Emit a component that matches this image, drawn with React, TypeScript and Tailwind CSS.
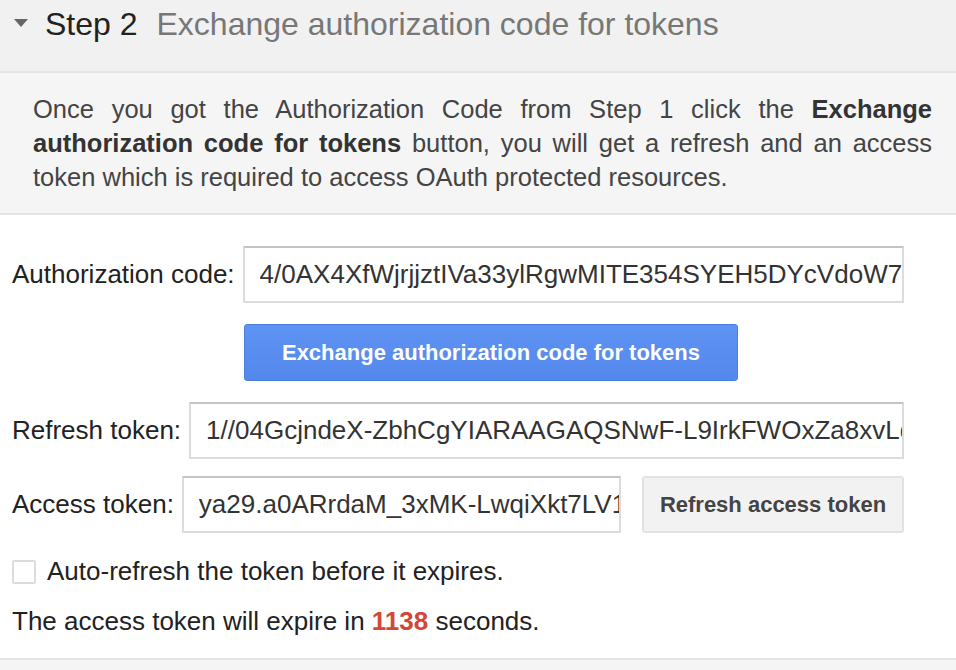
import React from 'react';

const font = { fontFamily: '"Liberation Sans", Arial, sans-serif' };

// one label + text input row
function TokenRow({ label, value, children }: { label: string; value: string; children?: React.ReactNode }) {
  return (
    <div className="flex items-center">
      <label className="shrink-0 text-[26px] text-[#222]">{label}</label>
      <input
        readOnly
        value={value}
        className="ml-2 h-[57px] min-w-0 flex-1 border-2 border-[#dcdcdc] border-t-[#c4c4c4] bg-white pl-[15px] pr-0 text-[26px] text-[#333] outline-none"
      />
      {children}
    </div>
  );
}

export default function App() {
  return (
    <div className="min-h-[670px] w-[956px] bg-[#f5f5f5]" style={font}>
      {/* step header */}
      <div className="flex h-[71px] items-center bg-[#f1f1f1] pb-[24px]">
        <svg width="14" height="8" viewBox="0 0 14 8" className="ml-[14px] mr-[17px] mt-[-2px]">
          <path d="M0 0 H14 L7 8 Z" fill="#666" />
        </svg>
        <span className="text-[32px] text-[#222]">Step 2</span>
        <span className="ml-[19px] text-[32px] text-[#777]">Exchange authorization code for tokens</span>
      </div>

      {/* description */}
      <div className="border-y-2 border-[#e4e4e4] bg-[#f5f5f5] pb-[19px] pl-[33px] pr-[24px] pt-[19px]">
        <p className="text-justify text-[25.5px] leading-[34px] text-[#444]">
          Once you got the Authorization Code from Step 1 click the{' '}
          <b className="text-[#333]">Exchange authorization code for tokens</b> button, you will get a refresh and an
          access token which is required to access OAuth protected resources.
        </p>
      </div>

      {/* form */}
      <div className="border-b-2 border-[#e4e4e4] bg-white pb-[17px] pl-[12px] pr-[52px] pt-[31px]">
        <TokenRow label="Authorization code:" value="4/0AX4XfWjrjjztIVa33ylRgwMITE354SYEH5DYcVdoW7gT" />

        <div className="mt-[21px] pl-[232px]">
          <button className="h-[57px] w-[494px] rounded-[3px] border border-[#4a7ee0] bg-gradient-to-b from-[#5e92f3] to-[#5488ec] text-[22px] font-bold text-white">
            Exchange authorization code for tokens
          </button>
        </div>

        <div className="mt-[21px]">
          <TokenRow label="Refresh token:" value="1//04GcjndeX-ZbhCgYIARAAGAQSNwF-L9IrkFWOxZa8xvLqw" />
        </div>

        <div className="mt-[17px]">
          <TokenRow label="Access token:" value="ya29.a0ARrdaM_3xMK-LwqiXkt7LV1hQ">
            <button className="ml-[21px] h-[57px] w-[262px] shrink-0 rounded-[3px] border-2 border-[#e2e2e2] bg-[#f2f2f2] text-[22px] font-bold text-[#444]">
              Refresh access token
            </button>
          </TokenRow>
        </div>

        <label className="mt-[19px] flex items-center">
          <span className="h-[24px] w-[24px] shrink-0 rounded-[2px] border-2 border-[#dcdcdc] bg-white" />
          <span className="ml-[11px] text-[26px] text-[#222]">Auto-refresh the token before it expires.</span>
        </label>

        <p className="mt-[11px] text-[26px] text-[#222]">
          The access token will expire in <b className="text-[#d14836]">1138</b> seconds.
        </p>
      </div>
    </div>
  );
}
